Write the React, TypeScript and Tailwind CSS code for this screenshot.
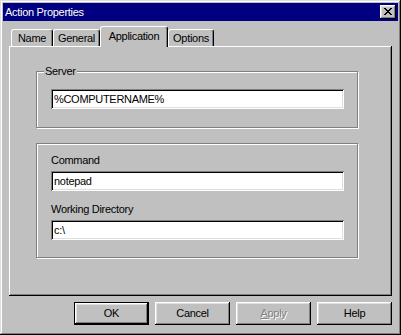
import React from "react";

// Win95-ish 3D edges, all done with inset shadows
const raised =
  "shadow-[inset_-1px_-1px_#000,inset_1px_1px_#fff,inset_-2px_-2px_#808080,inset_2px_2px_#dfdfdf]";
const sunken =
  "shadow-[inset_1px_1px_#808080,inset_-1px_-1px_#fff,inset_2px_2px_#000,inset_-2px_-2px_#dfdfdf]";

function CloseGlyph() {
  // 8x7 pixel X
  const rows = ["11000011", "01100110", "00111100", "00011000", "00111100", "01100110", "11000011"];
  return (
    <svg width="8" height="7" viewBox="0 0 8 7" shapeRendering="crispEdges">
      {rows.flatMap((r, y) =>
        r.split("").map((c, x) => (c === "1" ? <rect key={`${x}-${y}`} x={x} y={y} width="1" height="1" fill="#000" /> : null))
      )}
    </svg>
  );
}

function Tab({ label, width, active }: { label: string; width: string; active?: boolean }) {
  return (
    <div
      className={`${width} ${
        active ? "relative z-10 h-[21px] -mb-px pb-[2px]" : "h-[17px]"
      } flex items-center justify-center bg-[#c0c0c0] border-t border-l border-r border-t-white border-l-white border-r-black rounded-t-[3px] shadow-[inset_-1px_0_#808080] leading-[13px]`}
    >
      {label}
    </div>
  );
}

function Field({ value }: { value: string }) {
  return (
    <div className={`w-[293px] h-[20px] bg-white ${sunken} flex items-center pl-[3px] leading-[13px]`}>
      {value}
    </div>
  );
}

function GroupBox({ label, height, children }: { label?: string; height: string; children: React.ReactNode }) {
  return (
    <div
      className={`relative w-[322px] ${height} border border-[#808080] shadow-[inset_1px_1px_#fff,1px_1px_#fff]`}
    >
      {label && (
        <span className="absolute left-[7px] -top-[7px] px-[1px] bg-[#c0c0c0] leading-[13px]">{label}</span>
      )}
      {children}
    </div>
  );
}

function Button({ children, isDefault, disabled }: { children: React.ReactNode; isDefault?: boolean; disabled?: boolean }) {
  return (
    <div
      className={`w-[75px] h-[23px] flex items-center justify-center bg-[#c0c0c0] leading-[13px] ${
        isDefault ? "border border-black" : ""
      } ${raised} ${disabled ? "text-[#808080] [text-shadow:1px_1px_#fff]" : ""}`}
    >
      {children}
    </div>
  );
}

export default function App() {
  return (
    <div
      className={`w-[401px] h-[335px] bg-[#c0c0c0] p-[3px] flex flex-col text-[11px] tracking-[-0.3px] text-black font-['Liberation_Sans',Arial,sans-serif] shadow-[inset_-1px_-1px_#000,inset_1px_1px_#dfdfdf,inset_-2px_-2px_#808080,inset_2px_2px_#fff]`}
    >
      {/* Title bar */}
      <div className="h-[18px] bg-[#000080] flex items-center pl-[2px] pr-[2px]">
        <span className="text-white leading-[13px]">Action Properties</span>
        <div className={`ml-auto w-[16px] h-[14px] bg-[#c0c0c0] ${raised} flex items-center justify-center pb-px`}>
          <CloseGlyph />
        </div>
      </div>

      {/* Tabs + page */}
      <div className="mt-[5px] ml-[6px] w-[383px]">
        <div className="flex items-end h-[20px] pl-[2px]">
          <Tab label="Name" width="w-[42px]" />
          <Tab label="General" width="w-[47px]" />
          <Tab label="Application" width="w-[68px]" active />
          <Tab label="Options" width="w-[46px]" />
        </div>

        <div className="h-[250px] shadow-[inset_-1px_-1px_#000,inset_1px_1px_#fff,inset_-2px_-2px_#808080] pt-[25px] pl-[27px] flex flex-col">
          <GroupBox label="Server" height="h-[57px]">
            <div className="pt-[17px] pl-[14px]">
              <Field value="%COMPUTERNAME%" />
            </div>
          </GroupBox>

          <div className="mt-[15px]">
            <GroupBox height="h-[115px]">
              <div className="pt-[10px] pl-[14px] flex flex-col">
                <span className="leading-[13px]">Command</span>
                <div className="mt-[4px]">
                  <Field value="notepad" />
                </div>
                <span className="mt-[12px] leading-[13px]">Working Directory</span>
                <div className="mt-[4px]">
                  <Field value="c:\" />
                </div>
              </div>
            </GroupBox>
          </div>
        </div>
      </div>

      {/* Buttons */}
      <div className="mt-[6px] flex justify-end gap-[6px] pr-[6px]">
        <Button isDefault>OK</Button>
        <Button>Cancel</Button>
        <Button disabled>
          <span>
            <span className="underline underline-offset-1">A</span>pply
          </span>
        </Button>
        <Button>Help</Button>
      </div>
    </div>
  );
}
